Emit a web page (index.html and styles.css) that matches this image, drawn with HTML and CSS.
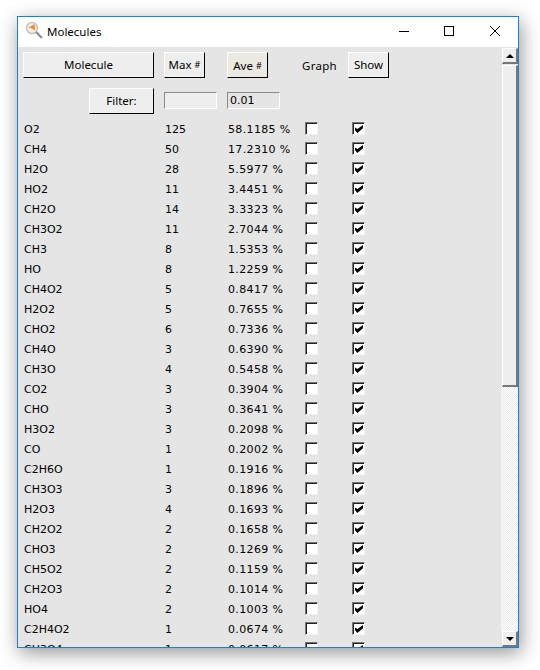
FILE: index.html
```html
<!DOCTYPE html>
<html lang="en">
<head>
    <meta charset="UTF-8">
    <title>Molecules</title>
    <link rel="stylesheet" href="styles.css">
</head>
<body>
    <div class="window">
        <div class="titlebar">
            <svg class="app-icon" width="20" height="20" viewBox="0 0 20 20">
                <circle cx="7" cy="7" r="5.5" fill="#f4f0ea" stroke="#c9c4bc" stroke-width="1.6"/>
                <path d="M3.5 6.5 L9.5 3 L10 9.5 L7 7.5 Z" fill="#f58a1f"/>
                <path d="M11 11 L17 17" stroke="#8c8c8c" stroke-width="2.2"/>
            </svg>
            <span class="title">Molecules</span>
            <div class="win-buttons">
                <svg width="46" height="30" viewBox="0 0 46 30"><path d="M19 14.5 H29" stroke="#000"/></svg>
                <svg width="46" height="30" viewBox="0 0 46 30"><rect x="18.5" y="9.5" width="9" height="9" fill="none" stroke="#000"/></svg>
                <svg width="46" height="30" viewBox="0 0 46 30"><path d="M18 9 L28 19 M28 9 L18 19" stroke="#000" fill="none"/></svg>
            </div>
        </div>
        <div class="content">
            <div class="panel">
                <div class="controls">
                    <button class="btn">Molecule</button>
                    <button class="btn btn-small">Max <span class="hash">#</span></button>
                    <button class="btn btn-small btn-active">Ave <span class="hash">#</span></button>
                    <span class="graph-label">Graph</span>
                    <button class="btn btn-small">Show</button>
                    <button class="btn btn-filter">Filter:</button>
                    <input class="entry entry-disabled" type="text" disabled>
                    <input class="entry" type="text" value="0.01">
                </div>
                <div class="rows">
                    <div class="row"><span>O2</span><span>125</span><span>58.1185 %</span><span class="check"></span><span class="check on"></span></div>
                    <div class="row"><span>CH4</span><span>50</span><span>17.2310 %</span><span class="check"></span><span class="check on"></span></div>
                    <div class="row"><span>H2O</span><span>28</span><span>5.5977 %</span><span class="check"></span><span class="check on"></span></div>
                    <div class="row"><span>HO2</span><span>11</span><span>3.4451 %</span><span class="check"></span><span class="check on"></span></div>
                    <div class="row"><span>CH2O</span><span>14</span><span>3.3323 %</span><span class="check"></span><span class="check on"></span></div>
                    <div class="row"><span>CH3O2</span><span>11</span><span>2.7044 %</span><span class="check"></span><span class="check on"></span></div>
                    <div class="row"><span>CH3</span><span>8</span><span>1.5353 %</span><span class="check"></span><span class="check on"></span></div>
                    <div class="row"><span>HO</span><span>8</span><span>1.2259 %</span><span class="check"></span><span class="check on"></span></div>
                    <div class="row"><span>CH4O2</span><span>5</span><span>0.8417 %</span><span class="check"></span><span class="check on"></span></div>
                    <div class="row"><span>H2O2</span><span>5</span><span>0.7655 %</span><span class="check"></span><span class="check on"></span></div>
                    <div class="row"><span>CHO2</span><span>6</span><span>0.7336 %</span><span class="check"></span><span class="check on"></span></div>
                    <div class="row"><span>CH4O</span><span>3</span><span>0.6390 %</span><span class="check"></span><span class="check on"></span></div>
                    <div class="row"><span>CH3O</span><span>4</span><span>0.5458 %</span><span class="check"></span><span class="check on"></span></div>
                    <div class="row"><span>CO2</span><span>3</span><span>0.3904 %</span><span class="check"></span><span class="check on"></span></div>
                    <div class="row"><span>CHO</span><span>3</span><span>0.3641 %</span><span class="check"></span><span class="check on"></span></div>
                    <div class="row"><span>H3O2</span><span>3</span><span>0.2098 %</span><span class="check"></span><span class="check on"></span></div>
                    <div class="row"><span>CO</span><span>1</span><span>0.2002 %</span><span class="check"></span><span class="check on"></span></div>
                    <div class="row"><span>C2H6O</span><span>1</span><span>0.1916 %</span><span class="check"></span><span class="check on"></span></div>
                    <div class="row"><span>CH3O3</span><span>3</span><span>0.1896 %</span><span class="check"></span><span class="check on"></span></div>
                    <div class="row"><span>H2O3</span><span>4</span><span>0.1693 %</span><span class="check"></span><span class="check on"></span></div>
                    <div class="row"><span>CH2O2</span><span>2</span><span>0.1658 %</span><span class="check"></span><span class="check on"></span></div>
                    <div class="row"><span>CHO3</span><span>2</span><span>0.1269 %</span><span class="check"></span><span class="check on"></span></div>
                    <div class="row"><span>CH5O2</span><span>2</span><span>0.1159 %</span><span class="check"></span><span class="check on"></span></div>
                    <div class="row"><span>CH2O3</span><span>2</span><span>0.1014 %</span><span class="check"></span><span class="check on"></span></div>
                    <div class="row"><span>HO4</span><span>2</span><span>0.1003 %</span><span class="check"></span><span class="check on"></span></div>
                    <div class="row"><span>C2H4O2</span><span>1</span><span>0.0674 %</span><span class="check"></span><span class="check on"></span></div>
                    <div class="row"><span>CH3O4</span><span>1</span><span>0.0617 %</span><span class="check"></span><span class="check on"></span></div>
                </div>
            </div>
            <div class="scrollbar">
                <div class="arrow arrow-top"><span class="tri tri-up"></span></div>
                <div class="thumb"></div>
                <div class="trough"></div>
                <div class="arrow"><span class="tri tri-down"></span></div>
            </div>
        </div>
    </div>
</body>
</html>
```

FILE: styles.css
```css
html, body {
    margin: 0;
    padding: 0;
    background-color: #ffffff;
}
body {
    box-sizing: border-box;
    width: 540px;
    height: 670px;
    padding: 16px 0 0 17px;
    font-family: "DejaVu Sans", sans-serif;
    font-size: 11px;
    color: #000;
}
.window {
    width: 500px;
    height: 630px;
    border: 1px solid #1a82d6;
    display: flex;
    flex-direction: column;
    box-shadow: 2px 5px 18px rgba(0,0,0,0.42);
}
.titlebar {
    height: 30px;
    flex: none;
    background-color: #fff;
    display: flex;
    align-items: center;
}
.app-icon {
    margin-left: 7px;
    margin-bottom: 2px;
}
.title {
    margin-left: 2px;
    margin-bottom: 2px;
    font-family: "Noto Sans", sans-serif;
    font-size: 11.5px;
    color: #000;
}
.win-buttons {
    margin-left: auto;
    display: flex;
}
.content {
    flex: 1;
    min-height: 0;
    display: flex;
    background-color: #e5e5e5;
}
.panel {
    flex: 1;
    min-width: 0;
    overflow: hidden;
    padding: 5px 0 0 5px;
}
.controls {
    display: grid;
    grid-template-columns: 141px 63px 75px 46px 1fr;
    grid-template-rows: 26px 26px;
    row-gap: 10px;
    align-items: center;
}
.btn {
    height: 26px;
    width: 131px;
    padding: 0 0 2px;
    font-family: "Noto Sans", sans-serif;
    font-size: 11.5px;
    color: #000;
    background-color: #eeeeee;
    border: 1px solid;
    border-color: #ffffff #000000 #000000 #ffffff;
}
.btn-small {
    width: 41px;
}
.btn-active {
    padding: 0;
    background-color: #ece9e0;
}
.hash {
    font-size: 9px;
    vertical-align: 1px;
}
.btn-filter {
    grid-column: 1;
    width: 65px;
    justify-self: end;
    margin-right: 10px;
}
.graph-label {
    font-family: "Noto Sans", sans-serif;
    font-size: 11.5px;
    letter-spacing: 0.3px;
}
.entry {
    box-sizing: border-box;
    width: 53px;
    height: 17px;
    margin-top: -1px;
    padding: 0 2px;
    font-family: inherit;
    font-size: 11px;
    color: #000;
    background-color: #e5e5e5;
    border: 1px solid;
    border-color: #8a8a8a #ffffff #ffffff #8a8a8a;
    outline: none;
}
.entry-disabled {
    background-color: #eeeeee;
}
.rows {
    margin-top: 5px;
}
.row {
    height: 20px;
    display: grid;
    grid-template-columns: 141px 63px 78px 47px 1fr;
    align-items: center;
}
.row span:first-child {
    padding-left: 1px;
}
.row span:nth-child(2) {
    padding-left: 1px;
}
.row span:nth-child(3) {
    padding-left: 1px;
    letter-spacing: 0.35px;
}
.check {
    position: relative;
    box-sizing: border-box;
    width: 13px;
    height: 13px;
    margin-top: -1px;
    background-color: #ffffff;
    border: 1px solid;
    border-color: #777777 #f4f4f4 #f4f4f4 #777777;
    box-shadow: inset 1px 1px 0 #222;
}
.check.on::after {
    content: "";
    position: absolute;
    left: 2px;
    top: 2px;
    width: 8px;
    height: 8px;
    background-color: #000;
    clip-path: polygon(0 30%, 30% 50%, 100% 0, 100% 40%, 30% 100%, 0 65%);
}
.scrollbar {
    width: 17px;
    flex: none;
    display: flex;
    flex-direction: column;
    background-color: #f2f2f2;
    background-image: repeating-conic-gradient(#ffffff 0 25%, #e9e9e9 0 50%);
    background-size: 2px 2px;
}
.arrow {
    box-sizing: border-box;
    height: 16px;
    margin-left: 1px;
    flex: none;
    display: flex;
    align-items: center;
    justify-content: center;
    background-color: #eeeeee;
    border: 1px solid;
    border-color: #ffffff #777777 #777777 #ffffff;
    border-right-width: 2px;
    border-bottom-width: 2px;
    box-shadow: -1px 0 0 #e5e5e5;
}
.arrow-top {
    margin-top: 1px;
    box-shadow: -1px -1px 0 #e5e5e5;
}
.tri {
    width: 0;
    height: 0;
    border-left: 4px solid transparent;
    border-right: 4px solid transparent;
}
.tri-up {
    border-bottom: 4px solid #000;
}
.tri-down {
    border-top: 4px solid #000;
}
.thumb {
    box-sizing: border-box;
    height: 322px;
    margin: 1px 0 0 1px;
    flex: none;
    background-color: #eeeeee;
    border: 1px solid;
    border-color: #ffffff #777777 #777777 #ffffff;
    border-right-width: 2px;
    border-bottom-width: 2px;
    box-shadow: -1px -1px 0 #e5e5e5;
}
.trough {
    flex: 1;
}
```
